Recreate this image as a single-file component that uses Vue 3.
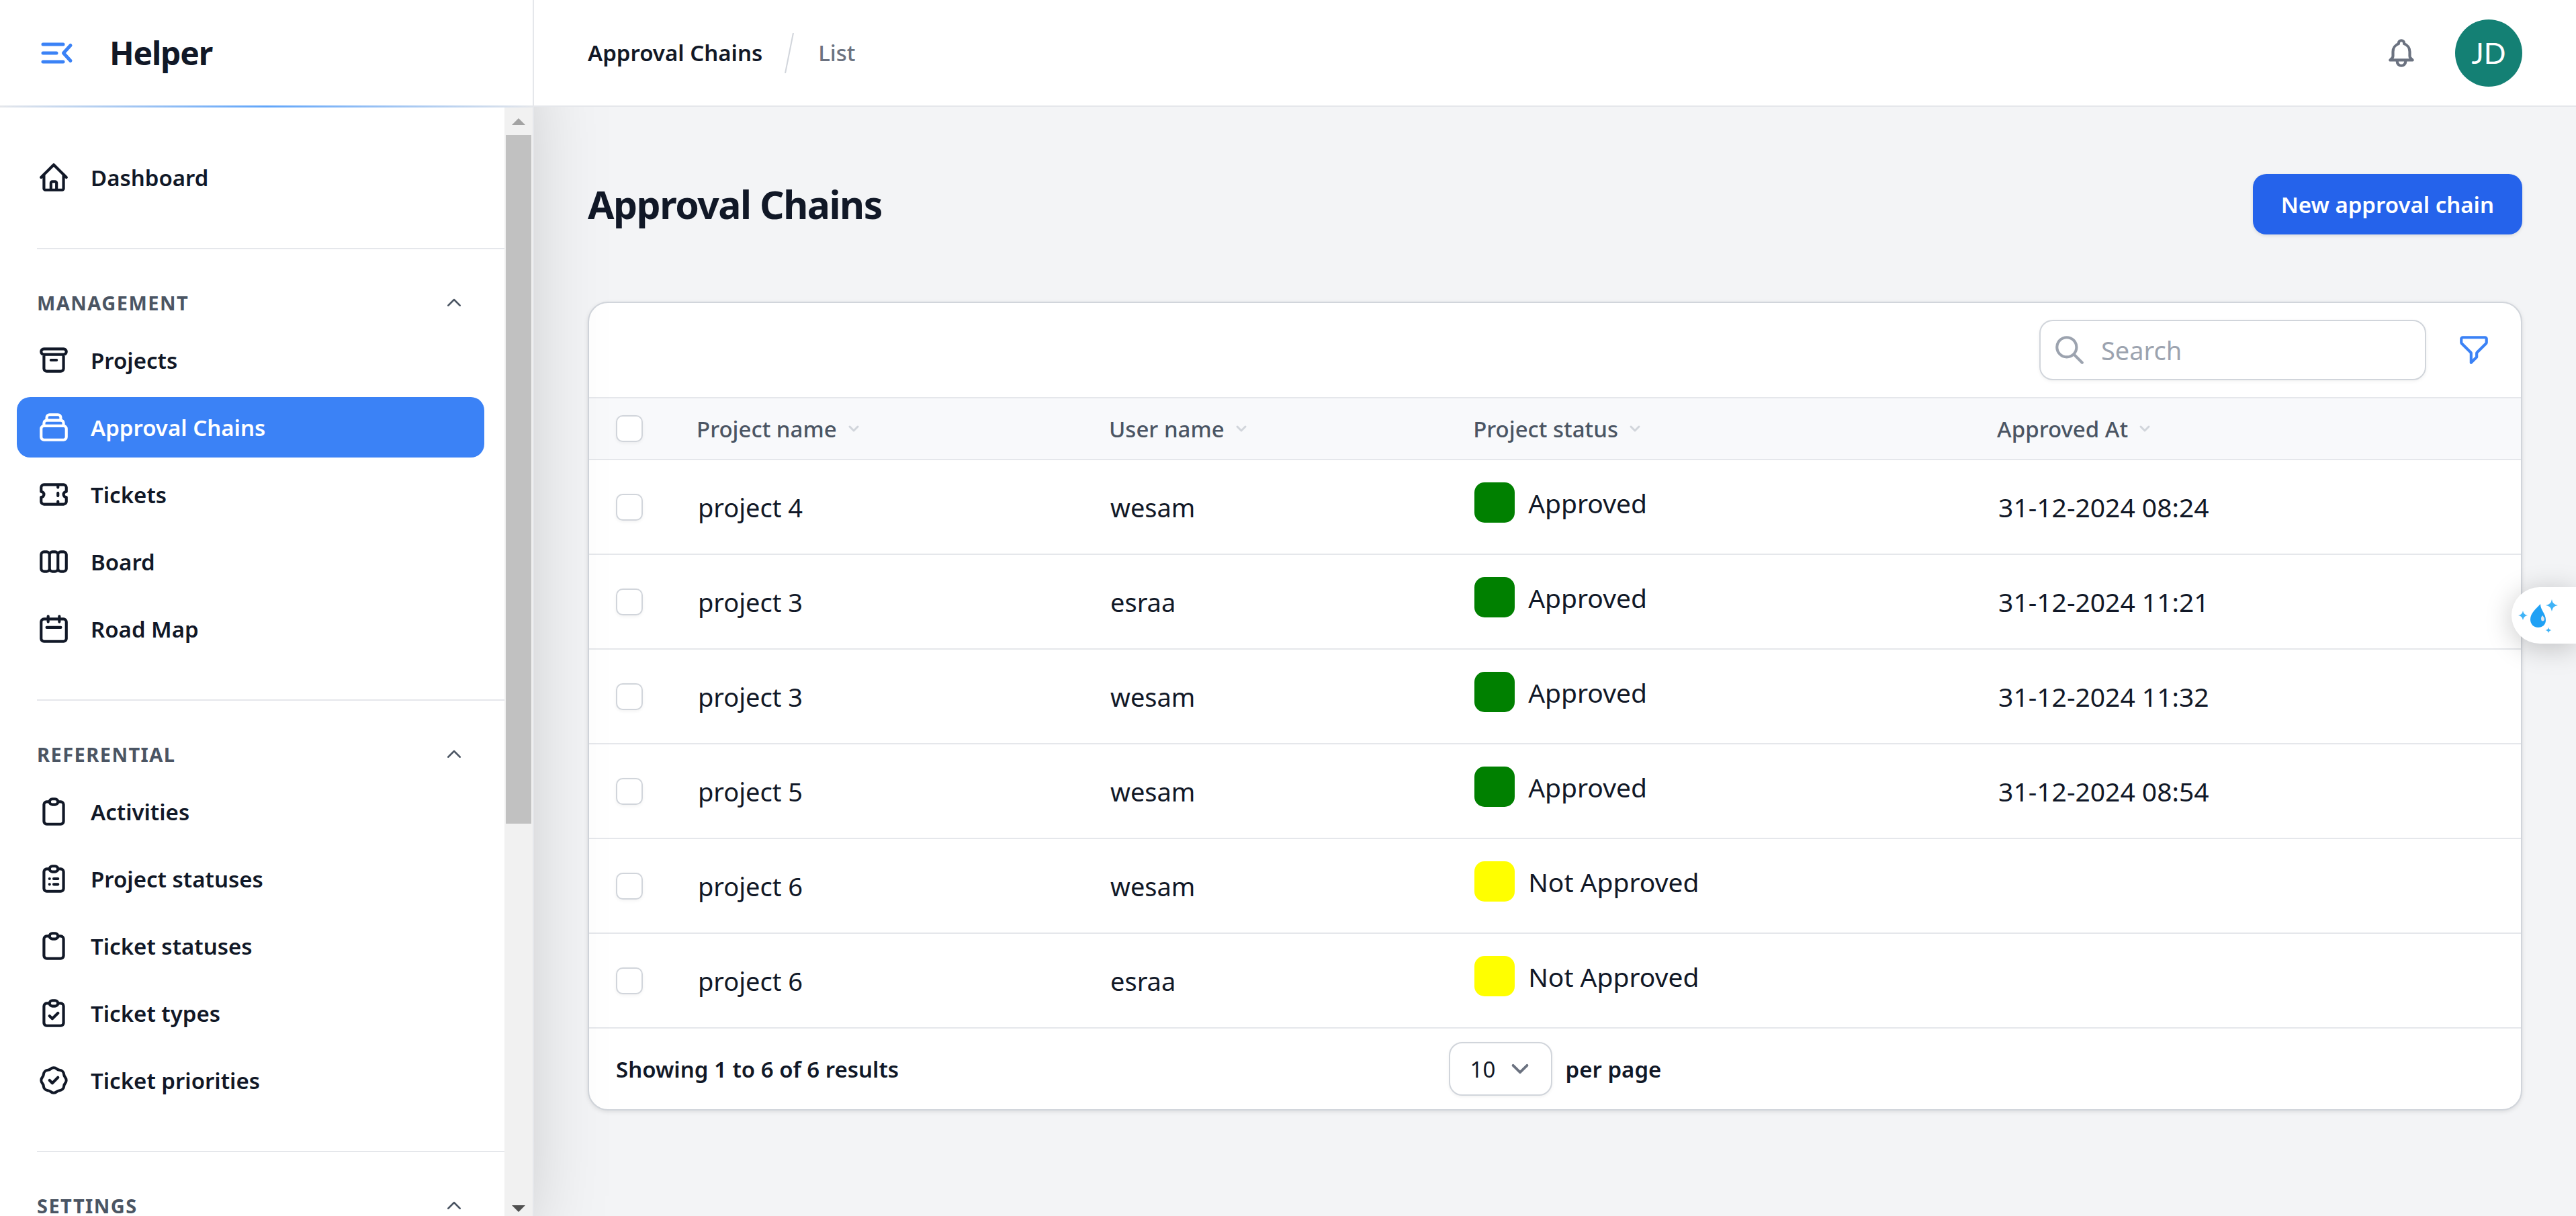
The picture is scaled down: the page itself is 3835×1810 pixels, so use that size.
<script setup>
import { ref } from 'vue'

const icons = {
  home: 'M3 12l2-2m0 0l7-7 7 7M5 10v10a1 1 0 001 1h3m10-11l2 2m-2-2v10a1 1 0 01-1 1h-3m-6 0a1 1 0 001-1v-4a1 1 0 011-1h2a1 1 0 011 1v4a1 1 0 001 1m-6 0h6',
  archive: 'M5 8h14M5 8a2 2 0 110-4h14a2 2 0 110 4M5 8v10a2 2 0 002 2h10a2 2 0 002-2V8m-9 4h4',
  collection: 'M19 11H5m14 0a2 2 0 012 2v6a2 2 0 01-2 2H5a2 2 0 01-2-2v-6a2 2 0 012-2m14 0V9a2 2 0 00-2-2M5 11V9a2 2 0 012-2m0 0V5a2 2 0 012-2h6a2 2 0 012 2v2M7 7h10',
  ticket: 'M15 5v2m0 4v2m0 4v2M5 5a2 2 0 00-2 2v3a2 2 0 110 4v3a2 2 0 002 2h14a2 2 0 002-2v-3a2 2 0 110-4V7a2 2 0 00-2-2H5z',
  boards: 'M9 17V7m0 10a2 2 0 01-2 2H5a2 2 0 01-2-2V7a2 2 0 012-2h2a2 2 0 012 2m0 10a2 2 0 002 2h2a2 2 0 002-2M9 7a2 2 0 012-2h2a2 2 0 012 2m0 10V7m0 10a2 2 0 002 2h2a2 2 0 002-2V7a2 2 0 00-2-2h-2a2 2 0 00-2 2',
  calendar: 'M8 7V3m8 4V3m-9 8h10M5 21h14a2 2 0 002-2V7a2 2 0 00-2-2H5a2 2 0 00-2 2v12a2 2 0 002 2z',
  clipboard: 'M9 5H7a2 2 0 00-2 2v12a2 2 0 002 2h10a2 2 0 002-2V7a2 2 0 00-2-2h-2M9 5a2 2 0 002 2h2a2 2 0 002-2M9 5a2 2 0 012-2h2a2 2 0 012 2',
  clipboardList: 'M9 5H7a2 2 0 00-2 2v12a2 2 0 002 2h10a2 2 0 002-2V7a2 2 0 00-2-2h-2M9 5a2 2 0 002 2h2a2 2 0 002-2M9 5a2 2 0 012-2h2a2 2 0 012 2m-3 7h3m-3 4h3m-6-4h.01M9 16h.01',
  clipboardCheck: 'M9 5H7a2 2 0 00-2 2v12a2 2 0 002 2h10a2 2 0 002-2V7a2 2 0 00-2-2h-2M9 5a2 2 0 002 2h2a2 2 0 002-2M9 5a2 2 0 012-2h2a2 2 0 012 2m-6 9l2 2 4-4',
  badgeCheck: 'M9 12l2 2 4-4M7.835 4.697a3.42 3.42 0 001.946-.806 3.42 3.42 0 014.438 0 3.42 3.42 0 001.946.806 3.42 3.42 0 013.138 3.138 3.42 3.42 0 00.806 1.946 3.42 3.42 0 010 4.438 3.42 3.42 0 00-.806 1.946 3.42 3.42 0 01-3.138 3.138 3.42 3.42 0 00-1.946.806 3.42 3.42 0 01-4.438 0 3.42 3.42 0 00-1.946-.806 3.42 3.42 0 01-3.138-3.138 3.42 3.42 0 00-.806-1.946 3.42 3.42 0 010-4.438 3.42 3.42 0 00.806-1.946 3.42 3.42 0 013.138-3.138z',
}

const groups = [
  { items: [{ label: 'Dashboard', icon: 'home' }] },
  {
    title: 'Management',
    items: [
      { label: 'Projects', icon: 'archive' },
      { label: 'Approval Chains', icon: 'collection', active: true },
      { label: 'Tickets', icon: 'ticket' },
      { label: 'Board', icon: 'boards' },
      { label: 'Road Map', icon: 'calendar' },
    ],
  },
  {
    title: 'Referential',
    items: [
      { label: 'Activities', icon: 'clipboard' },
      { label: 'Project statuses', icon: 'clipboardList' },
      { label: 'Ticket statuses', icon: 'clipboard' },
      { label: 'Ticket types', icon: 'clipboardCheck' },
      { label: 'Ticket priorities', icon: 'badgeCheck' },
    ],
  },
  { title: 'Settings', items: [] },
]

const columns = ['Project name', 'User name', 'Project status', 'Approved At']

const rows = [
  { project: 'project 4', user: 'wesam', approved: true, at: '31-12-2024 08:24' },
  { project: 'project 3', user: 'esraa', approved: true, at: '31-12-2024 11:21' },
  { project: 'project 3', user: 'wesam', approved: true, at: '31-12-2024 11:32' },
  { project: 'project 5', user: 'wesam', approved: true, at: '31-12-2024 08:54' },
  { project: 'project 6', user: 'wesam', approved: false, at: '' },
  { project: 'project 6', user: 'esraa', approved: false, at: '' },
]

const search = ref('')
const perPage = ref('10')
</script>

<template>
  <div class="app">
    <aside class="sidebar">
      <div class="brand">
        <button class="plain" type="button" aria-label="Collapse sidebar">
          <svg class="menu-icon" viewBox="0 0 60 60">
            <path d="M9 17h30M9 30h20M9 43h30M50 18.500L39.500 30L50 41.500" />
          </svg>
        </button>
        <a class="brand-name" href="#">Helper</a>
      </div>
      <div class="sidebar-body">
        <nav class="nav">
          <section v-for="(group, g) in groups" :key="g" class="group">
            <button v-if="group.title" class="group-title" type="button">
              <span>{{ group.title }}</span>
              <svg class="caret" viewBox="0 0 24 24"><path d="M5 15l7-7 7 7" /></svg>
            </button>
            <ul v-if="group.items.length" class="items">
              <li v-for="item in group.items" :key="item.label">
                <a class="item" :class="{ active: item.active }" href="#">
                  <svg class="icon" viewBox="0 0 24 24"><path :d="icons[item.icon]" /></svg>
                  <span>{{ item.label }}</span>
                </a>
              </li>
            </ul>
          </section>
        </nav>
        <div class="scrollbar" aria-hidden="true">
          <svg class="arrow-up" viewBox="0 0 20 10"><path d="M0 10L10 0L20 10z" /></svg>
          <div class="track"><div class="thumb"></div></div>
          <svg class="arrow-down" viewBox="0 0 20 10"><path d="M0 0L10 10L20 0z" /></svg>
        </div>
      </div>
    </aside>

    <div class="page">
      <header class="topbar">
        <nav class="crumbs" aria-label="Breadcrumb">
          <a class="crumb" href="#">Approval Chains</a>
          <svg class="slash" viewBox="0 0 14 60"><path d="M13 0L1 60" /></svg>
          <a class="crumb muted" href="#">List</a>
        </nav>
        <div class="account">
          <button class="plain" type="button" aria-label="Notifications">
            <svg class="icon bell" viewBox="0 0 24 24">
              <path d="M15 17h5l-1.405-1.405A2.032 2.032 0 0118 14.158V11a6.002 6.002 0 00-4-5.659V5a2 2 0 10-4 0v.341C7.67 6.165 6 8.388 6 11v3.159c0 .538-.214 1.055-.595 1.436L4 17h5m6 0v1a3 3 0 11-6 0v-1m6 0H9" />
            </svg>
          </button>
          <button class="avatar" type="button">JD</button>
        </div>
      </header>

      <main class="content">
        <div class="heading">
          <h1>Approval Chains</h1>
          <a class="primary" href="#">New approval chain</a>
        </div>

        <section class="card">
          <div class="toolbar">
            <label class="search">
              <svg class="icon" viewBox="0 0 24 24"><path d="M21 21l-6-6m2-5a7 7 0 11-14 0 7 7 0 0114 0z" /></svg>
              <input v-model="search" type="search" placeholder="Search" aria-label="Search" />
            </label>
            <button class="filter" type="button" aria-label="Filter">
              <svg class="icon" viewBox="0 0 24 24">
                <path d="M3 4a1 1 0 011-1h16a1 1 0 011 1v2.586a1 1 0 01-.293.707l-6.414 6.414a1 1 0 00-.293.707V17l-4 4v-6.586a1 1 0 00-.293-.707L3.293 7.293A1 1 0 013 6.586V4z" />
              </svg>
            </button>
          </div>

          <table>
            <colgroup>
              <col class="c-check" />
              <col class="c-project" />
              <col class="c-user" />
              <col class="c-status" />
              <col />
            </colgroup>
            <thead>
              <tr>
                <th class="check"><input type="checkbox" aria-label="Select all" /></th>
                <th v-for="column in columns" :key="column">
                  <button class="sort" type="button">
                    <span>{{ column }}</span>
                    <svg viewBox="0 0 20 20">
                      <path d="M5.293 7.293a1 1 0 011.414 0L10 10.586l3.293-3.293a1 1 0 111.414 1.414l-4 4a1 1 0 01-1.414 0l-4-4a1 1 0 010-1.414z" />
                    </svg>
                  </button>
                </th>
              </tr>
            </thead>
            <tbody>
              <tr v-for="(row, r) in rows" :key="r">
                <td class="check"><input type="checkbox" :aria-label="`Select ${row.project}, ${row.user}`" /></td>
                <td>{{ row.project }}</td>
                <td>{{ row.user }}</td>
                <td class="status-cell">
                  <div class="status">
                    <span class="swatch" :class="row.approved ? 'green' : 'yellow'"></span>
                    <span>{{ row.approved ? 'Approved' : 'Not Approved' }}</span>
                  </div>
                </td>
                <td class="date">{{ row.at }}</td>
              </tr>
            </tbody>
          </table>

          <footer class="pager">
            <span>Showing 1 to 6 of 6 results</span>
            <div class="per-page">
              <div class="select">
                <select id="per-page" v-model="perPage">
                  <option>5</option>
                  <option>10</option>
                  <option>25</option>
                  <option>50</option>
                </select>
                <svg viewBox="0 0 20 20"><path d="M6 8l4 4 4-4" /></svg>
              </div>
              <label for="per-page">per page</label>
            </div>
          </footer>
        </section>
      </main>
    </div>

    <button class="widget" type="button" aria-label="Assistant">
      <svg viewBox="0 0 96 84">
        <path class="drop" d="M43 25C43 34 51 39 51 49C51 56 46 60 39.500 60C33 60 28 55 28 48C28 38 38 31 43 25z" />
        <path class="glint" d="M46 42C44 44 43.500 47 44.500 49.500C46 51.500 49 50.500 49 47.500C49 45 47 44 46 42z" />
        <path class="star" d="M60 18Q61 26 69 27Q61 28 60 36Q59 28 51 27Q59 26 60 18zM17 35Q18 41 24 42Q18 43 17 49Q16 43 10 42Q16 41 17 35zM55 59.500Q55.500 63.500 59.500 64Q55.500 64.500 55 68.500Q54.500 64.500 50.500 64Q54.500 63.500 55 59.500z" />
      </svg>
    </button>
  </div>
</template>

<style>
body {
  background: #f3f4f6;
}
</style>

<style scoped>
.app {
  display: flex;
  min-height: 100vh;
  font-family: "Noto Sans", "Open Sans", sans-serif;
  font-size: 33px;
  color: #111827;
}
.app *,
.app *::before,
.app *::after {
  box-sizing: border-box;
}
a {
  color: inherit;
  text-decoration: none;
}
button,
input,
select {
  font: inherit;
  color: inherit;
}
.plain {
  display: flex;
  padding: 0;
  border: 0;
  background: none;
}
svg {
  display: block;
  flex: none;
}
.icon {
  width: 50px;
  height: 50px;
  fill: none;
  stroke: currentColor;
  stroke-width: 2;
  stroke-linecap: round;
  stroke-linejoin: round;
}

/* Sidebar */
.sidebar {
  position: sticky;
  top: 0;
  z-index: 1;
  display: flex;
  flex: none;
  flex-direction: column;
  width: 795px;
  height: 100vh;
  background: #fff;
  border-right: 2px solid #e5e7eb;
  box-shadow: 0 62px 125px -30px rgba(0, 0, 0, 0.25);
}
.brand {
  display: flex;
  flex: none;
  align-items: center;
  gap: 48px;
  height: 160px;
  padding-left: 55px;
  border-bottom: 3px solid;
  border-image: linear-gradient(to right, #e5e7eb, #60a5fa, #e5e7eb) 1;
}
.menu-icon {
  width: 60px;
  height: 60px;
  fill: none;
  stroke: #3b82f6;
  stroke-width: 5;
  stroke-linecap: round;
  stroke-linejoin: round;
}
.brand-name {
  font-size: 48px;
  font-weight: 700;
  letter-spacing: -0.025em;
}
.sidebar-body {
  display: flex;
  flex: 1;
  min-height: 0;
}
.nav {
  flex: 1;
  padding: 59px 0 0 25px;
  overflow: hidden;
}
.group + .group::before {
  content: "";
  display: block;
  height: 2px;
  margin: 60px 0 60px 30px;
  background: #e5e7eb;
}
.group-title {
  display: flex;
  align-items: center;
  justify-content: space-between;
  width: 696px;
  height: 40px;
  margin-bottom: 20px;
  padding: 0 30px;
  border: 0;
  background: none;
  color: #4b5563;
  font-size: 29px;
  font-weight: 700;
  line-height: 30px;
  letter-spacing: 0.05em;
  text-transform: uppercase;
}
.caret {
  width: 30px;
  height: 30px;
  fill: none;
  stroke: currentColor;
  stroke-width: 2;
  stroke-linecap: round;
  stroke-linejoin: round;
}
.items {
  display: flex;
  flex-direction: column;
  gap: 10px;
  margin: 0 30px 0 0;
  padding: 0;
  list-style: none;
}
.item {
  display: flex;
  align-items: center;
  gap: 30px;
  height: 90px;
  padding: 0 30px;
  border-radius: 20px;
  font-weight: 600;
}
.item.active {
  background: #3b82f6;
  color: #fff;
}
.scrollbar {
  display: flex;
  flex: none;
  flex-direction: column;
  align-items: center;
  width: 42px;
  background: #f1f1f1;
}
.arrow-up,
.arrow-down {
  width: 20px;
  height: 10px;
}
.arrow-up {
  margin: 16px 0 15px;
  fill: #a3a3a3;
}
.arrow-down {
  margin: 6px 0;
  fill: #505050;
}
.track {
  flex: 1;
  width: 38px;
}
.thumb {
  height: 64.6%;
  background: #c1c1c1;
}

/* Top bar */
.page {
  flex: 1;
  min-width: 0;
}
.topbar {
  position: relative;
  z-index: 2;
  display: flex;
  align-items: center;
  justify-content: space-between;
  height: 159px;
  padding: 0 80px;
  background: #fff;
  border-bottom: 2px solid #e5e7eb;
}
.crumbs {
  display: flex;
  align-items: center;
  font-weight: 600;
}
.slash {
  width: 14px;
  height: 60px;
  margin: 0 36px 0 33px;
  fill: none;
  stroke: #d1d5db;
  stroke-width: 2;
}
.muted {
  color: #6b7280;
  font-weight: 500;
}
.account {
  display: flex;
  align-items: center;
  gap: 55px;
}
.bell {
  color: #6b7280;
}
.avatar {
  width: 100px;
  height: 100px;
  padding: 0;
  border: 0;
  border-radius: 50%;
  background: #148074;
  color: #fff;
  font-family: Lato, sans-serif;
  font-size: 43px;
}

/* Page content */
.content {
  padding: 100px 80px;
}
.heading {
  display: flex;
  align-items: center;
  justify-content: space-between;
  height: 90px;
  margin-bottom: 100px;
}
h1 {
  margin: 0;
  font-size: 57px;
  font-weight: 700;
  line-height: 80px;
  letter-spacing: -0.025em;
}
.primary {
  display: flex;
  align-items: center;
  height: 90px;
  padding: 0 42px;
  border-radius: 20px;
  background: #2563eb;
  box-shadow: 0 2px 5px rgba(0, 0, 0, 0.1);
  color: #fff;
  font-weight: 600;
}
.card {
  overflow: hidden;
  border: 2px solid #d1d5db;
  border-radius: 30px;
  background: #fff;
  box-shadow: 0 2px 6px rgba(0, 0, 0, 0.1);
}
.toolbar {
  display: flex;
  align-items: center;
  justify-content: flex-end;
  gap: 26px;
  padding: 25px;
}
.search {
  display: flex;
  align-items: center;
  gap: 22px;
  width: 576px;
  height: 90px;
  padding: 0 18px;
  border: 2px solid #d1d5db;
  border-radius: 20px;
  box-shadow: 0 2px 5px rgba(0, 0, 0, 0.05);
  color: #9ca3af;
}
.search input {
  flex: 1;
  min-width: 0;
  height: 80px;
  padding: 0;
  border: 0;
  outline: 0;
  background: none;
  font-size: 38px;
}
.search input::placeholder {
  color: #9ca3af;
}
.filter {
  display: flex;
  align-items: center;
  justify-content: center;
  width: 90px;
  height: 90px;
  padding: 0;
  border: 0;
  background: none;
  color: #3b82f6;
}

/* Table */
table {
  width: 100%;
  border-collapse: separate;
  border-spacing: 0;
  table-layout: fixed;
}
.c-check {
  width: 120px;
}
.c-project {
  width: 21.35%;
}
.c-user {
  width: 18.85%;
}
.c-status {
  width: 27.12%;
}
th,
td {
  padding: 0 40px;
  border-top: 2px solid #e5e7eb;
  text-align: left;
  vertical-align: middle;
}
th {
  height: 92px;
  background: #f8f9fb;
}
td {
  height: 141px;
  padding-left: 42px;
  font-size: 38px;
}
th.check,
td.check {
  padding: 0 0 0 40px;
}
input[type="checkbox"] {
  display: block;
  width: 40px;
  height: 40px;
  margin: 0;
  appearance: none;
  border: 2px solid #d1d5db;
  border-radius: 10px;
  background: #fff;
  box-shadow: 0 2px 5px rgba(0, 0, 0, 0.05);
}
.sort {
  display: flex;
  align-items: center;
  gap: 10px;
  padding: 0;
  border: 0;
  background: none;
  color: #4b5563;
  font-weight: 500;
  white-space: nowrap;
}
.sort svg {
  width: 30px;
  height: 30px;
  fill: #d1d5db;
}
.status-cell {
  padding-top: 33px;
  vertical-align: top;
}
.status-cell,
.date {
  font-size: 39px;
}
.status {
  display: flex;
  align-items: center;
  gap: 20px;
  height: 60px;
}
.swatch {
  width: 60px;
  height: 60px;
  border-radius: 15px;
}
.green {
  background: #008000;
}
.yellow {
  background: #ffff00;
}

/* Pagination */
.pager {
  display: grid;
  grid-template-columns: 1fr auto 1fr;
  align-items: center;
  padding: 20px 40px;
  border-top: 2px solid #e5e7eb;
  font-weight: 600;
}
.per-page {
  display: flex;
  align-items: center;
  gap: 20px;
}
.select {
  position: relative;
}
select {
  display: block;
  width: 154px;
  height: 80px;
  padding: 0 0 0 30px;
  appearance: none;
  border: 2px solid #d1d5db;
  border-radius: 20px;
  outline: 0;
  background: #fff;
  box-shadow: 0 2px 5px rgba(0, 0, 0, 0.05);
  font-weight: 400;
}
.select svg {
  position: absolute;
  top: 14px;
  right: 22px;
  width: 52px;
  height: 52px;
  fill: none;
  stroke: #6b7280;
  stroke-width: 1.5;
  stroke-linecap: round;
  stroke-linejoin: round;
  pointer-events: none;
}

/* Floating assistant tab */
.widget {
  position: fixed;
  top: 874px;
  right: 0;
  z-index: 3;
  width: 96px;
  height: 84px;
  padding: 0;
  border: 0;
  border-radius: 42px 0 0 42px;
  background: #fff;
  box-shadow: 0 6px 40px rgba(0, 0, 0, 0.22);
}
.widget svg {
  width: 96px;
  height: 84px;
}
.drop {
  fill: #1fa1f5;
}
.glint {
  fill: #e5e7eb;
}
.star {
  fill: #3fb3f7;
}
</style>
